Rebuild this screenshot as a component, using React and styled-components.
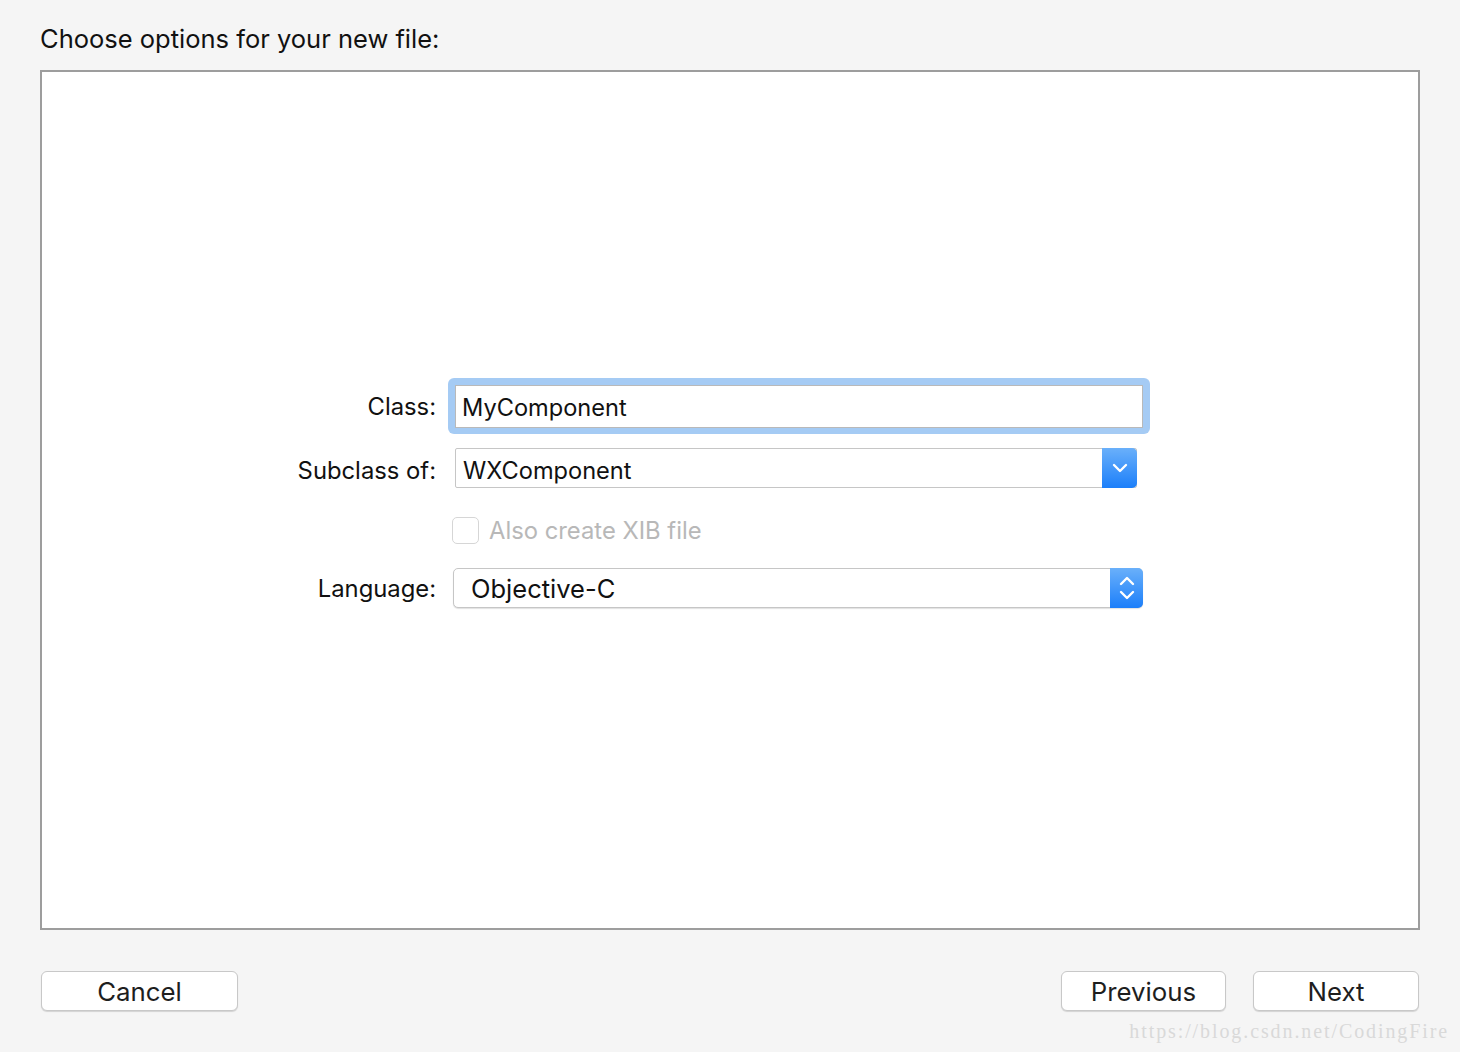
import React from "react";
import styled, { createGlobalStyle } from "styled-components";

const Global = createGlobalStyle`
  html, body { margin: 0; padding: 0; background: #f5f5f5; }
  body { font-family: Inter, "Noto Sans", "Liberation Sans", sans-serif; color: #1b1b1b; }
  * { box-sizing: border-box; }
`;

const Page = styled.div`
  position: relative;
  width: 1460px;
  height: 1052px;
  padding: 21px 40px 0 40px;
  display: flex;
  flex-direction: column;
`;

const Title = styled.div`
  font-size: 25.5px;
  line-height: 36px;
  height: 49px;
  color: #111;
`;

const Panel = styled.div`
  width: 1380px;
  height: 860px;
  background: #fff;
  border: 2px solid #9d9d9d;
  padding-top: 306px;
  display: flex;
  flex-direction: column;
`;

const Row = styled.div`
  display: grid;
  grid-template-columns: 394px 1fr;
  align-items: center;
  margin-top: ${(p) => p.$mt || 0}px;
`;

const Label = styled.div`
  text-align: right;
  font-size: 23.8px;
  color: #111;
  padding-top: ${(p) => p.$dy || 0}px;
`;

const Control = styled.div`
  padding-left: ${(p) => p.$offset}px;
  display: flex;
  align-items: center;
`;

const FocusRing = styled.div`
  width: 702px;
  height: 56px;
  padding: 7px 7px 6px 7px;
  border-radius: 6px;
  background: #a5cbf4;
`;

const TextField = styled.div`
  width: 100%;
  height: 100%;
  background: #fff;
  border: 1px solid #b9b9b9;
  font-size: 23.6px;
  padding: 1px 0 0 6px;
  display: flex;
  align-items: center;
  color: #111;
`;

const Popup = styled.div`
  width: ${(p) => p.$w}px;
  height: 40px;
  background: #fff;
  border: 1px solid #c6c6c6;
  border-radius: ${(p) => p.$radius}px;
  display: flex;
  align-items: stretch;
  box-shadow: ${(p) => (p.$raised ? "0 1px 1px rgba(0,0,0,0.12)" : "none")};
`;

const PopupText = styled.div`
  flex: 1;
  display: flex;
  align-items: center;
  padding-left: ${(p) => p.$pad}px;
  padding-top: ${(p) => p.$dy || 0}px;
  font-size: ${(p) => p.$size}px;
  color: #111;
`;

const Arrow = styled.div`
  width: ${(p) => p.$w}px;
  margin: -1px -1px -1px 0;
  border-radius: 0 5px 5px 0;
  background: linear-gradient(#6ab0fa, #1c7ffa);
  display: flex;
  align-items: center;
  justify-content: center;
`;

const CheckRow = styled.div`
  display: flex;
  align-items: center;
  gap: 10px;
`;

const CheckBox = styled.div`
  width: 27px;
  height: 27px;
  border: 1px solid #d6d6d6;
  border-radius: 5px;
  background: #fff;
`;

const CheckLabel = styled.div`
  font-size: 23.8px;
  color: #b8b8b8;
`;

const Footer = styled.div`
  display: flex;
  align-items: center;
  margin-top: 41px;
  width: 1380px;
`;

const Button = styled.div`
  width: ${(p) => p.$w}px;
  height: 40px;
  margin-left: ${(p) => p.$ml || 0}px;
  background: #fff;
  border: 1px solid #c8c8c8;
  border-radius: 6px;
  box-shadow: 0 1px 1px rgba(0, 0, 0, 0.14);
  display: flex;
  align-items: center;
  justify-content: center;
  font-size: 25.8px;
  color: #1e1e1e;
`;

const Spacer = styled.div`
  flex: ${(p) => (p.$fixed ? `0 0 ${p.$fixed}px` : 1)};
`;

const Watermark = styled.div`
  position: absolute;
  right: 11px;
  bottom: 9px;
  font-family: "Liberation Serif", "DejaVu Serif", serif;
  font-size: 20px;
  color: #d9d9d9;
  letter-spacing: 1.9px;
`;

const Chevron = () => (
  <svg width="16" height="10" viewBox="0 0 16 10">
    <path d="M2 2 L8 8 L14 2" fill="none" stroke="#fff" strokeWidth="2.4" strokeLinecap="round" strokeLinejoin="round" />
  </svg>
);

const UpDown = () => (
  <svg width="16" height="26" viewBox="0 0 16 26">
    <path d="M2 9 L8 3 L14 9" fill="none" stroke="#fff" strokeWidth="2.4" strokeLinecap="round" strokeLinejoin="round" />
    <path d="M2 17 L8 23 L14 17" fill="none" stroke="#fff" strokeWidth="2.4" strokeLinecap="round" strokeLinejoin="round" />
  </svg>
);

export default function App() {
  return (
    <>
      <Global />
      <Page>
        <Title>Choose options for your new file:</Title>
        <Panel>
          <Row>
            <Label $dy={1}>Class:</Label>
            <Control $offset={12}>
              <FocusRing>
                <TextField>MyComponent</TextField>
              </FocusRing>
            </Control>
          </Row>
          <Row $mt={14}>
            <Label $dy={5}>Subclass of:</Label>
            <Control $offset={19}>
              <Popup $w={682} $radius={2}>
                <PopupText $pad={7} $size={23.6} $dy={5}>WXComponent</PopupText>
                <Arrow $w={35}>
                  <Chevron />
                </Arrow>
              </Popup>
            </Control>
          </Row>
          <Row $mt={28}>
            <div />
            <Control $offset={16}>
              <CheckRow>
                <CheckBox />
                <CheckLabel>Also create XIB file</CheckLabel>
              </CheckRow>
            </Control>
          </Row>
          <Row $mt={23}>
            <Label $dy={1}>Language:</Label>
            <Control $offset={17}>
              <Popup $w={690} $radius={5} $raised>
                <PopupText $pad={17} $size={25.5} $dy={1}>Objective-C</PopupText>
                <Arrow $w={33}>
                  <UpDown />
                </Arrow>
              </Popup>
            </Control>
          </Row>
        </Panel>
        <Footer>
          <Button $w={197} $ml={1}>Cancel</Button>
          <Spacer />
          <Button $w={165}>Previous</Button>
          <Button $w={166} $ml={27}>Next</Button>
          <Spacer $fixed={1} />
        </Footer>
        <Watermark>https://blog.csdn.net/CodingFire</Watermark>
      </Page>
    </>
  );
}
